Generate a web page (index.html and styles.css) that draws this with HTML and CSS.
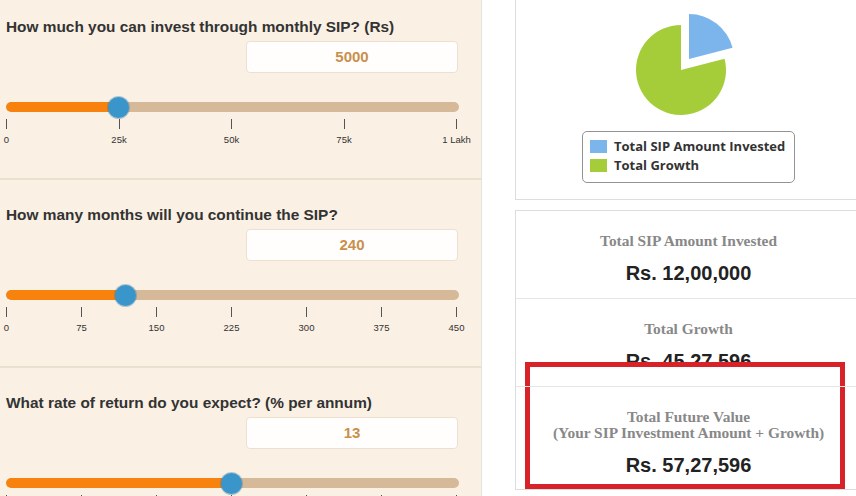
FILE: index.html
```html
<!DOCTYPE html>
<html lang="en">
<head>
<meta charset="utf-8">
<title>SIP Calculator</title>
<link rel="stylesheet" href="styles.css">
</head>
<body>
<div class="page">
  <div class="inputs">
    <section class="field">
      <div class="label">How much you can invest through monthly SIP? (Rs)</div>
      <div class="value-box">5000</div>
      <div class="slider">
        <div class="track"><div class="fill" style="width:113px"></div></div>
        <div class="thumb" style="left:102px"></div>
        <div class="ticks">
          <div class="tick"><span class="mark"></span><span class="tlabel">0</span></div>
          <div class="tick"><span class="mark"></span><span class="tlabel">25k</span></div>
          <div class="tick"><span class="mark"></span><span class="tlabel">50k</span></div>
          <div class="tick"><span class="mark"></span><span class="tlabel">75k</span></div>
          <div class="tick"><span class="mark"></span><span class="tlabel">1 Lakh</span></div>
        </div>
      </div>
    </section>
    <section class="field">
      <div class="label">How many months will you continue the SIP?</div>
      <div class="value-box">240</div>
      <div class="slider">
        <div class="track"><div class="fill" style="width:120px"></div></div>
        <div class="thumb" style="left:109px"></div>
        <div class="ticks">
          <div class="tick"><span class="mark"></span><span class="tlabel">0</span></div>
          <div class="tick"><span class="mark"></span><span class="tlabel">75</span></div>
          <div class="tick"><span class="mark"></span><span class="tlabel">150</span></div>
          <div class="tick"><span class="mark"></span><span class="tlabel">225</span></div>
          <div class="tick"><span class="mark"></span><span class="tlabel">300</span></div>
          <div class="tick"><span class="mark"></span><span class="tlabel">375</span></div>
          <div class="tick"><span class="mark"></span><span class="tlabel">450</span></div>
        </div>
      </div>
    </section>
    <section class="field">
      <div class="label">What rate of return do you expect? (% per annum)</div>
      <div class="value-box">13</div>
      <div class="slider">
        <div class="track"><div class="fill" style="width:226px"></div></div>
        <div class="thumb" style="left:215px"></div>
        <div class="ticks">
          <div class="tick"><span class="mark"></span><span class="tlabel">0</span></div>
          <div class="tick"><span class="mark"></span><span class="tlabel">5</span></div>
          <div class="tick"><span class="mark"></span><span class="tlabel">10</span></div>
          <div class="tick"><span class="mark"></span><span class="tlabel">15</span></div>
          <div class="tick"><span class="mark"></span><span class="tlabel">20</span></div>
          <div class="tick"><span class="mark"></span><span class="tlabel">25</span></div>
          <div class="tick"><span class="mark"></span><span class="tlabel">30</span></div>
        </div>
      </div>
    </section>
  </div>

  <div class="results">
    <div class="card chart-card">
      <svg class="pie" width="345" height="125" viewBox="0 0 345 125">
        <path d="M165,70 L208.55,58.66 A45,45 0 1,1 165,25 Z" fill="#a5cd3a"/>
        <path d="M173,59 L173,14 A45,45 0 0,1 216.55,47.66 Z" fill="#7cb5ec"/>
      </svg>
      <div class="legend">
        <div class="legend-item"><span class="swatch swatch-blue"></span>Total SIP Amount Invested</div>
        <div class="legend-item"><span class="swatch swatch-green"></span>Total Growth</div>
      </div>
    </div>

    <div class="card summary-card">
      <div class="row">
        <div class="row-label">Total SIP Amount Invested</div>
        <div class="row-value">Rs. 12,00,000</div>
      </div>
      <div class="row">
        <div class="row-label">Total Growth</div>
        <div class="row-value">Rs. 45,27,596</div>
      </div>
      <div class="row row-last">
        <div class="row-label">Total Future Value<br>(Your SIP Investment Amount + Growth)</div>
        <div class="row-value">Rs. 57,27,596</div>
      </div>
      <div class="highlight"></div>
    </div>
  </div>
</div>
</body>
</html>
```
FILE: styles.css
```css
html, body {
  margin: 0;
  padding: 0;
  overflow: hidden;
  background: #ffffff;
}

body {
  font-family: "Liberation Sans", Arial, sans-serif;
  color: #333333;
}

.page {
  display: flex;
  align-items: flex-start;
  width: 900px;
}

/* ---------- left: inputs ---------- */
.inputs {
  width: 481px;
  margin-top: -8px;
  background: #faf0e4;
  border-right: 1px solid #e7e2dc;
}

.field {
  height: 188px;
  box-sizing: border-box;
  padding: 26px 23px 0 6px;
  border-bottom: 2px solid #ebdfcf;
  display: flex;
  flex-direction: column;
}

.label {
  font-weight: bold;
  font-size: 15.4px;
  line-height: 18px;
  color: #333333;
  white-space: nowrap;
}

.value-box {
  align-self: flex-end;
  margin-top: 5px;
  width: 212px;
  height: 32px;
  box-sizing: border-box;
  background: #fffefc;
  border: 1px solid #ebe0d2;
  border-radius: 4px;
  text-align: center;
  font-weight: bold;
  font-size: 15px;
  line-height: 30px;
  color: #c8904c;
}

.slider {
  position: relative;
  margin-top: 29px;
  width: 453px;
}

.track {
  height: 10px;
  border-radius: 5px;
  background: #d5b999;
  overflow: hidden;
}

.fill {
  height: 100%;
  background: #f7820e;
  border-radius: 5px 0 0 5px;
}

.thumb {
  position: absolute;
  top: -5.5px;
  width: 21px;
  height: 21px;
  border-radius: 50%;
  background: #3a95cb;
  box-shadow: 0 0 0 1px rgba(40, 120, 170, 0.35);
}

.ticks {
  display: flex;
  justify-content: space-between;
  width: 451px;
  margin-top: 7px;
}

.tick {
  width: 1px;
  display: flex;
  flex-direction: column;
  align-items: center;
}

.mark {
  display: block;
  width: 1px;
  height: 10px;
  background: #555555;
}

.tlabel {
  display: block;
  margin-top: 5px;
  font-size: 9.5px;
  line-height: 11px;
  color: #333333;
  white-space: nowrap;
}

/* ---------- right: results ---------- */
.results {
  margin-left: 33px;
  width: 347px;
  display: flex;
  flex-direction: column;
  gap: 10px;
}

.card {
  border: 1px solid #dddddd;
  background: #ffffff;
}

.chart-card {
  margin-top: -1px;
  height: 199px;
  box-sizing: content-box;
}

.pie {
  display: block;
}

.legend {
  margin: 6px 0 0 66px;
  width: 213px;
  box-sizing: border-box;
  border: 1px solid #939393;
  border-radius: 5px;
  padding: 5px 7px 7px;
  font-family: "Open Sans", "DejaVu Sans", sans-serif;
  font-weight: bold;
  font-size: 13px;
  color: #333333;
}

.legend-item {
  display: flex;
  align-items: center;
  line-height: 19px;
  white-space: nowrap;
}

.swatch {
  width: 17px;
  height: 13px;
  margin-right: 7px;
  flex: none;
}

.swatch-blue { background: #7cb5ec; }
.swatch-green { background: #a5cd3a; }

.summary-card {
  position: relative;
}

.row {
  padding: 22px 0 13px;
  border-bottom: 1px solid #e6e6e6;
  text-align: center;
}

.row-last {
  position: relative;
  z-index: 2;
  border-top: 1px solid #e6e6e6;
  margin-top: -1px;
  border-bottom: none;
  padding-bottom: 12px;
}

.row-label {
  font-family: "Liberation Serif", "Times New Roman", serif;
  font-weight: bold;
  font-size: 15.4px;
  line-height: 16px;
  color: #888888;
}

.row-value {
  margin-top: 12px;
  font-weight: bold;
  font-size: 20px;
  line-height: 24px;
  color: #222222;
}

.highlight {
  position: absolute;
  z-index: 1;
  left: 9px;
  top: 151px;
  width: 320px;
  height: 127px;
  box-sizing: border-box;
  border: 5px solid #d8222a;
  background: #ffffff;
}
```
